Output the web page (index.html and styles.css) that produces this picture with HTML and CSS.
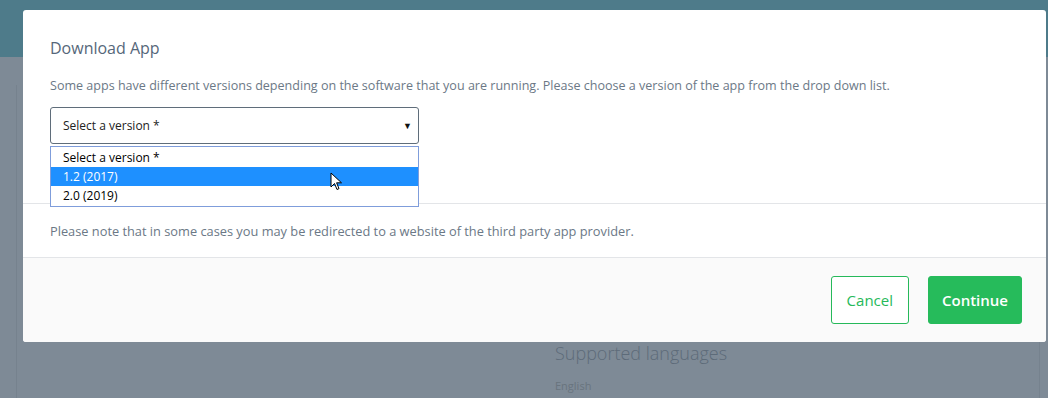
FILE: index.html
```html
<!DOCTYPE html>
<html lang="en">

<head>
    <meta charset="UTF-8">
    <meta name="viewport" content="width=device-width, initial-scale=1.0">
    <title>Download App</title>
    <link rel="stylesheet" href="styles.css">
</head>

<body>
    <div class="hero"></div>
    <div class="page">
        <div class="panel">
            <div class="panel-side">
                <h3>Supported languages</h3>
                <p>English</p>
            </div>
        </div>
    </div>

    <div class="modal">
        <div class="modal-header">
            <h2>Download App</h2>
            <p>Some apps have different versions depending on the software that you are running. Please choose a version of the app from the drop down list.</p>
            <div class="select-wrap">
                <div class="select">
                    <span>Select a version *</span>
                    <span class="arrow">&#9660;</span>
                </div>
                <ul class="options">
                    <li>Select a version *</li>
                    <li class="active">1.2 (2017)</li>
                    <li>2.0 (2019)</li>
                </ul>
                <svg class="cursor" width="13" height="20" viewBox="0 0 13 20">
                    <path d="M1 1 L1 15 L4.5 11.5 L7 17.5 L9 16.6 L6.6 10.8 L11.5 10.8 Z" fill="#fff" stroke="#000" stroke-width="1" stroke-linejoin="miter"/>
                </svg>
            </div>
        </div>
        <div class="modal-body">
            <p>Please note that in some cases you may be redirected to a website of the third party app provider.</p>
        </div>
        <div class="modal-footer">
            <button class="btn btn-outline">Cancel</button>
            <button class="btn btn-primary">Continue</button>
        </div>
    </div>
</body>

</html>
```

FILE: styles.css
```css
body {
    margin: 0;
    font-family: "Open Sans", Arial, sans-serif;
    background-color: #7e8a96;
    height: 398px;
    overflow: hidden;
    position: relative;
}

.hero {
    height: 57px;
    background-color: #4e7b8a;
}

.page {
    padding: 0 8px 0 16px;
}

.panel {
    margin-top: 28px;
    height: 320px;
    border-left: 1px solid #76828e;
    border-right: 1px solid #76828e;
    display: flex;
    justify-content: flex-end;
}

.panel-side {
    width: 484px;
    padding-top: 256px;
}

.panel-side h3 {
    margin: 0;
    font-size: 18px;
    font-weight: 300;
    color: #5d6b79;
    line-height: 24px;
}

.panel-side p {
    margin: 13px 0 0;
    font-size: 11px;
    color: #69747e;
}

/* modal over the page */
.modal {
    position: absolute;
    top: 10px;
    left: 23px;
    right: 2px;
    background: #fff;
    border-radius: 3px;
}

.modal-header {
    height: 167px;
    padding: 26px 27px 0;
    border-bottom: 1px solid #e3e5e8;
}

.modal-header h2 {
    margin: 0;
    font-size: 16px;
    font-weight: 400;
    line-height: 24px;
    color: #56677a;
}

.modal-header p,
.modal-body p {
    margin: 17px 0 0;
    font-size: 12.55px;
    line-height: 18px;
    color: #6b7886;
}

.select-wrap {
    position: relative;
    width: 369px;
    margin-top: 12px;
}

.select {
    height: 35px;
    border: 1px solid #5f6d7a;
    border-radius: 3px;
    display: flex;
    align-items: center;
    justify-content: space-between;
    padding: 0 6px 0 12px;
    font-size: 12px;
    color: #222;
}

.select .arrow {
    font-size: 9px;
    color: #111;
}

.options {
    position: absolute;
    top: 39px;
    left: 0;
    right: 0;
    margin: 0;
    padding: 1px 0;
    list-style: none;
    background: #fff;
    border: 1px solid #7f9ddb;
    font-size: 12px;
    color: #000;
}

.options li {
    height: 19px;
    line-height: 19px;
    padding-left: 12px;
}

.options li.active {
    background: #1e90ff;
    color: #fff;
}

.cursor {
    position: absolute;
    left: 280px;
    top: 65px;
}

.modal-body {
    height: 53px;
    padding: 0 27px;
    border-bottom: 1px solid #e3e5e8;
}

.modal-body p {
    margin: 0;
    padding-top: 18px;
    font-size: 12.8px;
}

.modal-footer {
    height: 84px;
    background: #fafafa;
    display: flex;
    justify-content: flex-end;
    align-items: flex-start;
    gap: 19px;
    padding: 18px 24px 0 0;
    box-sizing: border-box;
    border-radius: 0 0 3px 3px;
}

.btn {
    height: 48px;
    padding: 0 14px;
    border-radius: 3px;
    font-family: "Open Sans", Arial, sans-serif;
    font-size: 15px;
    cursor: pointer;
}

.btn-outline {
    background: #fff;
    border: 1px solid #26b95a;
    color: #26b95a;
    padding: 0 15px;
}

.btn-primary {
    background: #26bb5b;
    border: 1px solid #26bb5b;
    color: #fff;
    font-weight: 600;
    padding: 0 13px;
}
```
